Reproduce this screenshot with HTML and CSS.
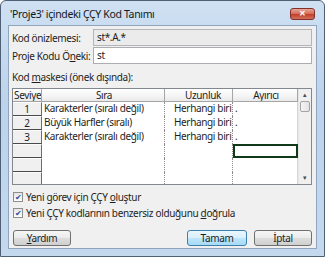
FILE: index.html
```html
<!DOCTYPE html>
<html>
<head>
  <title>ÇÇY Kod Tanımı</title>
  <link rel="stylesheet" href="styles.css">
</head>
<body>
  <div class="window">
    <div class="titlebar">
      <span class="title">'Proje3' içindeki ÇÇY Kod Tanımı</span>
      <button class="close-btn">&#x2715;</button>
    </div>
    <div class="content">
      <div class="field-row">
        <label class="field-label">Kod önizlemesi:</label>
        <div class="field-input readonly">st*.A.*</div>
      </div>
      <div class="field-row">
        <label class="field-label">Proje Kodu Ö<u>n</u>eki:</label>
        <div class="field-input">st</div>
      </div>

      <div class="mask-label">Kod <u>m</u>askesi (önek dışında):</div>

      <div class="mask-table">
        <div class="table-main">
          <div class="row head">
            <div class="cell c-level">Seviye</div>
            <div class="cell c-seq">Sıra</div>
            <div class="cell c-len">Uzunluk</div>
            <div class="cell c-sep">Ayırıcı</div>
          </div>
          <div class="row">
            <div class="cell c-level">1</div>
            <div class="cell c-seq">Karakterler (sıralı değil)</div>
            <div class="cell c-len">Herhangi biri</div>
            <div class="cell c-sep">.</div>
          </div>
          <div class="row">
            <div class="cell c-level">2</div>
            <div class="cell c-seq">Büyük Harfler (sıralı)</div>
            <div class="cell c-len">Herhangi biri</div>
            <div class="cell c-sep">.</div>
          </div>
          <div class="row">
            <div class="cell c-level current">3</div>
            <div class="cell c-seq">Karakterler (sıralı değil)</div>
            <div class="cell c-len">Herhangi biri</div>
            <div class="cell c-sep">.</div>
          </div>
          <div class="row">
            <div class="cell c-level"></div>
            <div class="cell c-seq"></div>
            <div class="cell c-len"></div>
            <div class="cell c-sep selected"></div>
          </div>
          <div class="row">
            <div class="cell c-level"></div>
            <div class="cell c-seq"></div>
            <div class="cell c-len"></div>
            <div class="cell c-sep"></div>
          </div>
          <div class="row">
            <div class="cell c-level"></div>
            <div class="cell c-seq"></div>
            <div class="cell c-len"></div>
            <div class="cell c-sep"></div>
          </div>
        </div>
        <div class="vscroll">
          <div class="arrow">&#x25B4;</div>
          <div class="track">
            <div class="thumb"></div>
          </div>
          <div class="arrow">&#x25BE;</div>
        </div>
      </div>

      <div class="check-row first">
        <span class="checkbox">&#x2714;</span>
        <span>Yeni görev için ÇÇY <u>o</u>luştur</span>
      </div>
      <div class="check-row">
        <span class="checkbox">&#x2714;</span>
        <span>Yeni ÇÇY kodlarının benzersiz olduğunu <u>d</u>oğrula</span>
      </div>

      <div class="button-row">
        <button class="btn"><u>Y</u>ardım</button>
        <div class="spacer"></div>
        <button class="btn default">Tamam</button>
        <button class="btn">İptal</button>
      </div>
    </div>
  </div>
</body>
</html>
```

FILE: styles.css
```css
* {
  box-sizing: border-box;
}

body {
  margin: 0;
  width: 325px;
  height: 257px;
  font-family: "Noto Sans", "Liberation Sans", sans-serif;
  font-size: 10px;
  letter-spacing: -0.35px;
  color: #1e1e1e;
  background: #ffffff;
}

u {
  text-decoration-thickness: 1px;
  text-underline-offset: 1px;
}

.window {
  width: 325px;
  height: 257px;
  border: 1px solid #4f6076;
  border-radius: 6px 6px 0 0;
  background: linear-gradient(180deg, #cfe0f2 0%, #bcd3eb 40%, #c4d9ee 100%);
  padding: 0 7px 7px;
  display: flex;
  flex-direction: column;
}

.titlebar {
  height: 24px;
  display: flex;
  align-items: center;
  padding: 2px 2px 0 2px;
}

.title {
  flex: 1;
  font-size: 10.5px;
  color: #101820;
  white-space: nowrap;
}

.close-btn {
  width: 25px;
  height: 12px;
  padding: 0;
  border: 1px solid #83302a;
  border-radius: 3px;
  background: linear-gradient(180deg, #e8a597 0%, #d6705e 45%, #c2412c 55%, #d3705a 100%);
  color: #ffffff;
  font-size: 8px;
  font-weight: bold;
  line-height: 10px;
  text-align: center;
}

.content {
  flex: 1;
  background: #f0f0f0;
  border: 1px solid #8fa5bf;
  padding: 3px 4px 0 3px;
  display: flex;
  flex-direction: column;
}

.field-row {
  display: flex;
  align-items: center;
  height: 17px;
  margin-bottom: 1px;
}

.field-label {
  width: 81px;
  white-space: nowrap;
}

.field-input {
  flex: 1;
  height: 17px;
  border: 1px solid #abadb3;
  background: #ffffff;
  padding: 0 3px;
  line-height: 15px;
}

.field-input.readonly {
  background: #ebebeb;
  border-color: #b5b5b5;
}

.mask-label {
  margin-top: 6px;
  height: 13px;
  line-height: 13px;
  margin-bottom: 4px;
  white-space: nowrap;
}

.mask-table {
  width: 300px;
  height: 97px;
  border: 1px solid #828790;
  background: #ffffff;
  display: flex;
  overflow: hidden;
}

.table-main {
  flex: 1;
  overflow: hidden;
}

.row {
  display: flex;
  height: 14px;
}

.row.head {
  height: 13px;
  background: linear-gradient(180deg, #ffffff 0%, #f4f4f4 60%, #e9e9e9 100%);
  border-bottom: 1px solid #a5a5a5;
}

.cell {
  height: 100%;
  line-height: 13px;
  white-space: nowrap;
  overflow: hidden;
}

.head .cell {
  text-align: center;
  line-height: 12px;
  border-right: 1px solid #a5a5a5;
}

.c-level {
  width: 29px;
  text-align: center;
}

.c-seq {
  width: 123px;
  padding-left: 2px;
}

.c-len {
  width: 68px;
  padding-left: 9px;
}

.c-sep {
  width: 65px;
  padding-left: 2px;
}

.row:not(.head) .c-level {
  background: #f0f0f0;
  border-bottom: 1px solid #4a4a4a;
  border-right: 1px solid #6d6d6d;
  border-top: 1px solid #fcfcfc;
}

.head .c-level {
  text-align: left;
  padding-left: 1px;
}

.row:not(.head) .c-seq,
.row:not(.head) .c-len {
  border-right: 1px dotted #8a8a8a;
}

.row:not(.head) .c-sep {
  border-right: 1px solid #d6d6d6;
}

.selected {
  border: 2px solid #0f3a17;
}

.row:not(.head) .c-sep.selected {
  border-right: 2px solid #0f3a17;
}

.vscroll {
  width: 13px;
  background: #f0f0f0;
  display: flex;
  flex-direction: column;
  border-left: 1px solid #e6e6e6;
}

.arrow {
  height: 12px;
  font-size: 7px;
  line-height: 12px;
  text-align: center;
  color: #4c4c4c;
}

.track {
  flex: 1;
}

.thumb {
  margin: 0 1px;
  height: 11px;
  border: 1px solid #a4a4a4;
  border-radius: 2px;
  background: linear-gradient(90deg, #f4f4f4, #e2e2e2);
}

.check-row {
  display: flex;
  align-items: center;
  gap: 3px;
  height: 14px;
  margin-top: 2px;
  padding-left: 1px;
  white-space: nowrap;
}

.check-row.first {
  margin-top: 5px;
}

.checkbox {
  width: 10px;
  height: 10px;
  border: 1px solid #8e8f8f;
  background: linear-gradient(180deg, #e4e4e4, #ffffff);
  color: #2b4a9a;
  font-size: 8px;
  line-height: 8px;
  text-align: center;
  letter-spacing: 0;
}

.button-row {
  display: flex;
  margin-top: 10px;
  height: 16px;
  padding-left: 1px;
  gap: 7px;
}

.spacer {
  flex: 1;
}

.btn {
  width: 58px;
  height: 16px;
  padding: 0;
  font-family: inherit;
  font-size: 10px;
  letter-spacing: -0.35px;
  color: #1e1e1e;
  border: 1px solid #707070;
  border-radius: 3px;
  background: linear-gradient(180deg, #f6f6f6 0%, #ebebeb 48%, #dddddd 52%, #cfcfcf 100%);
}

.btn.default {
  width: 60px;
  border-color: #3c7fb1;
  background: linear-gradient(180deg, #eaf6fd 0%, #d9f0fc 48%, #bee6fd 52%, #a7d9f5 100%);
}
```
